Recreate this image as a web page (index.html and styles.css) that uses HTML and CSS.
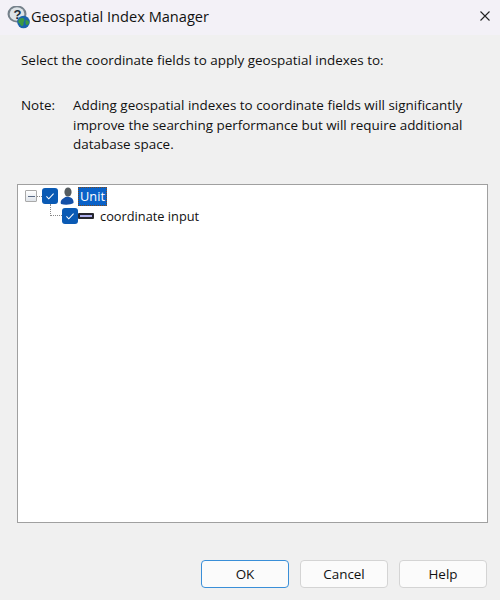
FILE: index.html
```html
<!DOCTYPE html>
<html lang="en">
<head>
<meta charset="utf-8">
<title>Geospatial Index Manager</title>
<link rel="stylesheet" href="styles.css">
</head>
<body>
<div class="dialog">
  <header class="titlebar">
    <svg class="app-icon" viewBox="0 0 24 24" width="24" height="24">
      <ellipse cx="10" cy="8" rx="9.500" ry="8.500" fill="#74808a"/>
      <ellipse cx="10" cy="8" rx="7.400" ry="6.700" fill="#dde3e7"/>
      <text x="6.400" y="12.500" class="app-q">?</text>
      <circle cx="16.500" cy="16" r="6.300" fill="#1b64ac"/>
      <path d="M13 12.500c2-1 4-.5 4.500 1s-1.500 2.500-1 4-1 3-2 2.500-1-2-2.500-3 0-3.500 1-4.500z" fill="#3d9a42"/>
      <path d="M19 14c1.500 0 3 1 3 2.500s-1.500 3-2.500 2.500-1.500-4-.5-5z" fill="#3d9a42"/>
    </svg>
    <span class="title">Geospatial Index Manager</span>
    <svg class="close" viewBox="0 0 10 10" width="10" height="10">
      <path d="M.5.500l9 9M9.500.500l-9 9" stroke="#222" stroke-width="1.100" fill="none"/>
    </svg>
  </header>
  <main class="content">
    <p class="lead">Select the coordinate fields to apply geospatial indexes to:</p>
    <div class="note">
      <span class="note-label">Note:</span>
      <p class="note-text">Adding geospatial indexes to coordinate fields will significantly improve the searching performance but will require additional database space.</p>
    </div>
    <div class="tree">
      <div class="row">
        <span class="expander"><span class="minus"></span></span>
        <span class="dash"></span>
        <span class="check"><svg viewBox="0 0 20 20" width="18" height="18"><path d="M5.500 10.500l3 3 6-6.500" stroke="#fff" stroke-width="1.300" fill="none"/></svg></span>
        <svg class="user" viewBox="0 0 14 18" width="14" height="18">
          <ellipse cx="8" cy="5" rx="3.600" ry="4.600" fill="#555c60"/>
          <path d="M1 17c-1-3 1-5 3-6 1-1 3-1.500 5-1 3 .5 5 3 4.500 6-3 2-9 2-12.500 1z" fill="#1450a8"/>
        </svg>
        <span class="label selected">Unit</span>
      </div>
      <div class="row">
        <span class="elbow"></span>
        <span class="check"><svg viewBox="0 0 20 20" width="18" height="18"><path d="M5.500 10.500l3 3 6-6.500" stroke="#fff" stroke-width="1.300" fill="none"/></svg></span>
        <span class="field"><span class="field-in"></span></span>
        <span class="label">coordinate input</span>
      </div>
    </div>
  </main>
  <footer class="buttons">
    <button class="btn default">OK</button>
    <button class="btn">Cancel</button>
    <button class="btn">Help</button>
  </footer>
</div>
</body>
</html>
```
FILE: styles.css
```css
* { box-sizing: border-box; }
html, body { margin: 0; padding: 0; }
body {
  width: 500px;
  height: 600px;
  overflow: hidden;
  font-family: "Open Sans", "Noto Sans", sans-serif;
  font-size: 13.45px;
  color: #111;
}
.dialog {
  width: 500px;
  height: 600px;
  display: flex;
  flex-direction: column;
  background: #f0f0f0;
}
.titlebar {
  height: 35px;
  flex: none;
  display: flex;
  align-items: center;
  padding: 0 0 3px 7px;
  background: #f3f1f7;
}
.app-icon { flex: none; margin-top: 3px; }
.app-q { font: 700 13px "Liberation Sans", sans-serif; fill: #1a2a38; }
.title {
  font-size: 14.6px;
  flex: 1;
  color: #111;
}
.close { flex: none; margin-right: 10px; }
.content {
  flex: 1;
  display: flex;
  flex-direction: column;
  padding: 15px 12px 0 17px;
}
.lead {
  margin: 0 0 0 4px;
  line-height: 20px;
  height: 20px;
}
.note {
  display: flex;
  margin: 26px 0 0 4px;
}
.note-label { width: 52px; flex: none; line-height: 19.500px; }
.note-text { margin: 0; line-height: 19.500px; width: 410px; }
.tree {
  flex: none;
  margin-top: 29.500px;
  width: 471px;
  height: 339px;
  background: #fff;
  border: 1px solid #a0a0a0;
  padding: 1px 0 0 7px;
}
.row {
  display: flex;
  align-items: center;
  height: 20px;
}
.expander {
  width: 12px;
  height: 12px;
  border: 1px solid #a9a9a9;
  border-radius: 1px;
  background: linear-gradient(#fff, #dfe4ea);
  display: flex;
  align-items: center;
  justify-content: center;
  flex: none;
}
.minus { width: 7px; height: 1px; background: #5a6a85; }
.dash { width: 5px; border-top: 1px dotted #888; flex: none; }
.check {
  width: 16px;
  height: 16px;
  border-radius: 3px;
  background: #0a5ab4;
  display: flex;
  align-items: center;
  justify-content: center;
  flex: none;
}
.user { flex: none; margin-left: 2px; }
.label { margin-left: 6px; line-height: 18px; font-size: 12.800px; }
.selected {
  background: #0a62c8;
  color: #fff;
  outline: 1px dotted #7a4a20;
  outline-offset: -1px;
  padding: 0 2px;
  margin-left: 4px;
  height: 19px;
}
.elbow {
  height: 12px;
  margin: -12px 0 0 25px;
  width: 12px;
  border-left: 1px dotted #888;
  border-bottom: 1px dotted #888;
  flex: none;
}
.field {
  width: 16px;
  height: 6px;
  background: #26262e;
  border-radius: 1px;
  padding: 2px 2px 2px 2px;
  flex: none;
  display: flex;
}
.field-in { flex: 1; background: #aeb0ee; }
.buttons {
  flex: none;
  height: 77px;
  display: flex;
  justify-content: flex-end;
  gap: 11px;
  padding: 37px 13px 0 0;
}
.btn {
  width: 88px;
  height: 28px;
  font: inherit;
  color: #111;
  background: #fbfbfb;
  border: 1px solid #d4d4d4;
  border-radius: 4px;
  padding: 0;
}
.default { border: 1.500px solid #3a8fd8; }
```
